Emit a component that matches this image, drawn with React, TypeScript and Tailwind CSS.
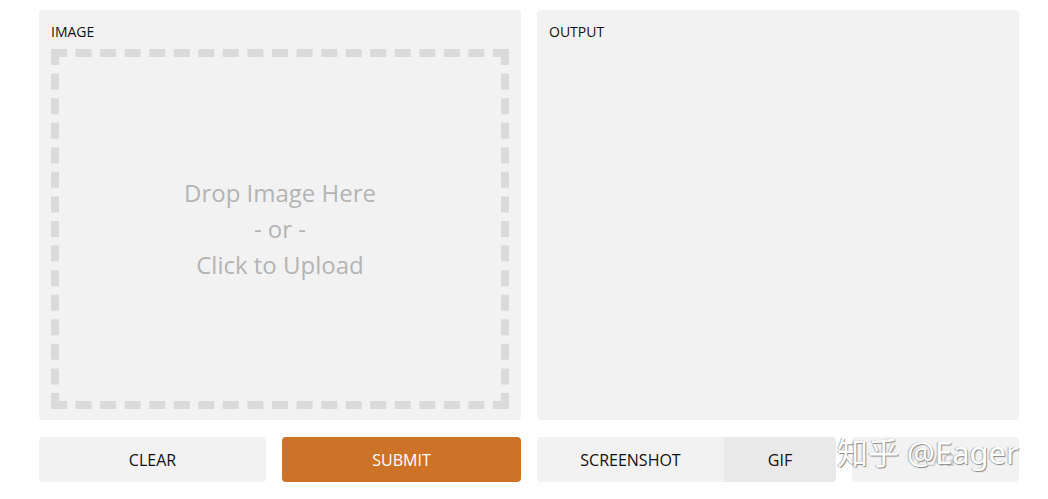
import React from 'react';

const font = { fontFamily: '"Open Sans", "Noto Sans", sans-serif' };

function Panel({ label, children }: { label: string; children?: React.ReactNode }) {
  return (
    <div className="flex h-[410px] w-[482px] flex-col rounded-[4px] bg-[#f2f2f2] px-3 pt-3 pb-[11px]">
      <div className="h-[27px] text-[14px] leading-[19px] text-[#111]">{label}</div>
      {children}
    </div>
  );
}

export default function App() {
  return (
    <div className="relative h-[499px] w-[1048px] bg-white pl-[39px] pt-[10px]" style={font}>
      <div className="flex gap-4">
        <Panel label="IMAGE">
          <div className="flex h-[360px] w-[458px] items-center justify-center border-8 border-dashed border-[#dadada]">
            <div className="text-center text-[24px] leading-[36px] text-[#b4b4b4]">
              Drop Image Here
              <br />- or -
              <br />
              Click to Upload
            </div>
          </div>
        </Panel>
        <Panel label="OUTPUT" />
      </div>

      <div className="mt-[17px] flex gap-4 text-[16px] text-[#111]">
        <div className="flex w-[482px] gap-4">
          <button className="h-[45px] w-[227px] rounded-[4px] bg-[#f2f2f2]">CLEAR</button>
          <button className="h-[45px] w-[239px] rounded-[4px] bg-[#cd7327] text-white">SUBMIT</button>
        </div>
        <div className="flex w-[482px] gap-4">
          <div className="flex h-[45px] w-[299px] overflow-hidden rounded-[4px]">
            <button className="w-[187px] bg-[#f2f2f2]">SCREENSHOT</button>
            <button className="w-[112px] bg-[#e9e9e9]">GIF</button>
          </div>
          <button className="h-[45px] w-[167px] rounded-[4px] bg-[#f2f2f2] text-[#c4c4c4]">FLAG</button>
        </div>
      </div>

      <div
        className="absolute left-[837px] top-[432px] text-[31px] leading-[40px] text-white"
        style={{ fontFamily: '"Noto Sans", "Noto Sans CJK SC", sans-serif', textShadow: '1px 1px 1px #8a8a8a, -1px 0 1px #b0b0b0' }}
      >
        知乎 @Eager
      </div>
    </div>
  );
}
